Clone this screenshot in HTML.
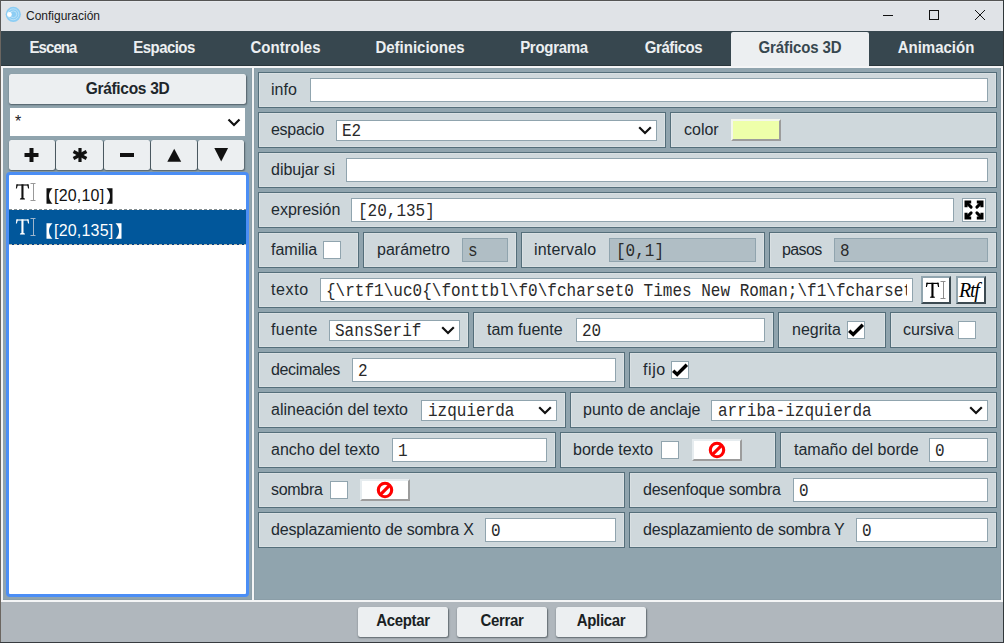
<!DOCTYPE html>
<html><head><meta charset="utf-8"><title>Configuración</title><style>
*{margin:0;padding:0;box-sizing:border-box}
html,body{width:1004px;height:643px;overflow:hidden;background:#555}
body{position:relative;font-family:"Liberation Sans",sans-serif}
div{position:absolute}
.t{white-space:pre;line-height:20px}
.lb{font-size:16px;color:#1E2A30}
.tab{font-weight:bold;font-size:15px;color:#ECEFF1;transform:scaleY(1.09);transform-origin:50% 15px}
.mono{font-family:"Liberation Mono",monospace;font-size:16px;color:#2a2a2a;transform:scaleY(1.1);transform-origin:0 15px}
.row{background:#CFD8DC;border:1px solid #546E7A;box-shadow:inset 1px 1px 0 #D9E0E3,inset -1px -1px 0 #D9E0E3}
.in{background:#fff;border:1px solid #90A4AE}
.dis{background:#B0BEC5;border:1px solid #90A4AE}
.cb{background:#fff;border:1px solid #90A4AE}
.btn{background:#ECEFF1;border-radius:2.5px;box-shadow:0.5px 1px 1.5px rgba(30,40,45,0.55)}
.bev{background:#fff;border-style:solid;border-width:2px;border-color:#E6ECEF #9C9C9C #9C9C9C #E6ECEF}
.bev2{background:#fff;border-style:solid;border-width:2px;border-color:#90A4AE #3C4A51 #3C4A51 #90A4AE}
svg{position:absolute;left:0;top:0}
</style></head><body>
<div style="left:0px;top:0px;width:1004px;height:1px;background:#545454"></div>
<div style="left:0px;top:0px;width:1px;height:643px;background:#5A5857"></div>
<div style="left:0px;top:31px;width:1px;height:612px;background:#6B6661"></div>
<div style="left:1003px;top:0px;width:1px;height:643px;background:#30373A"></div>
<div style="left:0px;top:642px;width:1004px;height:1px;background:#373B3F"></div>
<div style="left:1px;top:1px;width:1002px;height:30px;background:#E0E3E7"></div>
<div style="left:1px;top:1px;width:1002px;height:1px;background:#E6E9ED"></div>
<svg style="left:5px;top:6px" width="18" height="18" viewBox="0 0 18 18"><circle cx="8.3" cy="8.3" r="7.6" fill="#8CCDF4"/><circle cx="8.3" cy="8.3" r="5.5" fill="none" stroke="#BFE3F8" stroke-width="0.9"/><circle cx="8.3" cy="8.3" r="3.4" fill="none" stroke="#BFE3F8" stroke-width="0.9"/><circle cx="4.4" cy="8.5" r="2.4" fill="#fff"/></svg>
<div class="t " style="left:26px;top:6px;font-size:12px;color:#1b1b1b">Configuración</div>
<div style="left:883px;top:15px;width:10px;height:1px;background:#111"></div>
<div style="left:929px;top:10px;width:10px;height:10px;border:1px solid #111"></div>
<svg style="left:974px;top:9px" width="12" height="12" viewBox="0 0 12 12"><path d="M1 1L11 11M11 1L1 11" stroke="#111" stroke-width="1"/></svg>
<div style="left:1px;top:31px;width:1002px;height:35px;background:#37474F"></div>
<div style="left:1px;top:65px;width:1002px;height:1px;background:#2B383E"></div>
<div class="t tab" style="left:1px;top:38px;width:104px;text-align:center;letter-spacing:-0.9px">Escena</div>
<div class="t tab" style="left:105px;top:38px;width:118px;text-align:center;letter-spacing:-0.57px">Espacios</div>
<div class="t tab" style="left:223px;top:38px;width:125px;text-align:center;letter-spacing:0px">Controles</div>
<div class="t tab" style="left:348px;top:38px;width:144px;text-align:center;letter-spacing:0px">Definiciones</div>
<div class="t tab" style="left:492px;top:38px;width:124px;text-align:center;letter-spacing:-0.29px">Programa</div>
<div class="t tab" style="left:616px;top:38px;width:115px;text-align:center;letter-spacing:-0.43px">Gráficos</div>
<div style="left:731px;top:32px;width:138px;height:34px;background:#ECEFF1;border-radius:2px 2px 0 0"></div>
<div class="t tab" style="left:731px;top:38px;width:138px;text-align:center;color:#37474F;letter-spacing:-0.1px">Gráficos 3D</div>
<div class="t tab" style="left:869px;top:38px;width:134px;text-align:center;letter-spacing:0px">Animación</div>
<div style="left:1px;top:66px;width:1002px;height:536px;background:#F4F5F6"></div>
<div style="left:3px;top:68px;width:249px;height:532px;background:#90A4AE;box-shadow:inset -1px -1px 0 #8B9EA8"></div>
<div style="left:254px;top:68px;width:747px;height:532px;background:#90A4AE;box-shadow:inset 1px 0 0 #8B9EA8,inset -1px -1px 0 #8B9EA8"></div>
<div style="left:1px;top:602px;width:1002px;height:40px;background:#B0B7BD"></div>
<div class="btn" style="left:358px;top:607px;width:90px;height:30px;"></div>
<div class="t tab" style="left:358px;top:611px;width:90px;text-align:center;color:#1A1F24;font-size:15px;letter-spacing:-0.35px">Aceptar</div>
<div class="btn" style="left:457px;top:607px;width:90px;height:30px;"></div>
<div class="t tab" style="left:457px;top:611px;width:90px;text-align:center;color:#1A1F24;font-size:15px;letter-spacing:-0.35px">Cerrar</div>
<div class="btn" style="left:556px;top:607px;width:90px;height:30px;"></div>
<div class="t tab" style="left:556px;top:611px;width:90px;text-align:center;color:#1A1F24;font-size:15px;letter-spacing:-0.35px">Aplicar</div>
<div class="btn" style="left:9px;top:74px;width:237px;height:30px;"></div>
<div class="t tab" style="left:9px;top:79px;width:237px;text-align:center;color:#20262A;font-size:15.5px;letter-spacing:-0.3px">Gráficos 3D</div>
<div style="left:10px;top:108px;width:235px;height:28px;background:#fff"></div>
<div class="t " style="left:15px;top:112px;font-size:16px;color:#222">*</div>
<svg style="left:226px;top:116px" width="16" height="12" viewBox="0 0 16 12"><path d="M2.5 3.5L8 9L13.5 3.5" fill="none" stroke="#111" stroke-width="2.2"/></svg>
<div style="left:54px;top:141px;width:2px;height:28px;background:#7A8D96"></div>
<div style="left:102px;top:141px;width:2px;height:28px;background:#7A8D96"></div>
<div style="left:149px;top:141px;width:2px;height:28px;background:#7A8D96"></div>
<div style="left:196px;top:141px;width:2px;height:28px;background:#7A8D96"></div>
<div class="btn" style="left:9px;top:140px;width:46px;height:30px;"></div>
<div class="btn" style="left:56px;top:140px;width:47px;height:30px;"></div>
<div class="btn" style="left:104px;top:140px;width:46px;height:30px;"></div>
<div class="btn" style="left:151px;top:140px;width:46px;height:30px;"></div>
<div class="btn" style="left:198px;top:140px;width:46px;height:30px;"></div>
<svg style="left:24px;top:147px" width="16" height="16" viewBox="0 0 16 16"><path d="M7 1h4v14h-4z" fill="none"/><rect x="5.5" y="1" width="4" height="14" fill="#111"/><rect x="0.5" y="6" width="14" height="4" fill="#111"/></svg>
<svg style="left:72px;top:147px" width="16" height="16" viewBox="0 0 16 16"><g stroke="#111" stroke-width="3.2"><path d="M8 1V15"/><path d="M1.5 4.5L14.5 11.5"/><path d="M1.5 11.5L14.5 4.5"/></g></svg>
<div style="left:120px;top:153px;width:14px;height:4px;background:#111"></div>
<svg style="left:166px;top:148px" width="16" height="15" viewBox="0 0 16 15"><path d="M1.3 13.8L8.2 0.8L15.2 13.8Z" fill="#111"/></svg>
<svg style="left:213px;top:147px" width="16" height="15" viewBox="0 0 16 15"><path d="M1.3 1L15.1 1L8.2 14.4Z" fill="#111"/></svg>
<div style="left:6px;top:172px;width:243px;height:425px;background:#fff;border:3px solid #4B8EF5;border-radius:4px"></div>
<div style="left:9px;top:210px;width:237px;height:34px;background:#01579B"></div>
<div style="left:9px;top:209px;width:237px;height:1px;background:repeating-linear-gradient(90deg,#858E90 0 3px,#fff 3px 5px)"></div>
<div style="left:9px;top:244px;width:237px;height:1px;background:repeating-linear-gradient(90deg,#B7BBAE 0 3px,#02408C 3px 5px)"></div>
<svg style="left:15px;top:181px" width="22" height="21" viewBox="0 0 22 21"><g fill="#111" transform="translate(0,0.6)"><path d="M1.5 2.8H13.5V4.0H1.5Z"/><path d="M1.4 2.8H3.0L1.9 7H0.9Z"/><path d="M12 2.8H13.6L14.1 7H13.1Z"/><path d="M6.4 2.8H8.5V17.5H6.4Z"/><path d="M5.6 16.5H9.3L10.1 17.8H4.8Z"/></g><path d="M15.5 2.5H20.5M18.5 2.5V19.5M15.5 19.5H20.5" stroke="#999" stroke-width="1" fill="none"/></svg>
<svg style="left:46px;top:188px" width="8" height="16" viewBox="0 0 8 16"><path d="M0.5 0.3H6.5Q3 3.5 3 8Q3 12.5 6.5 15.7H0.5Z" fill="#111"/></svg>
<div class="t" style="left:54px;top:186px;font-size:16px;color:#111;letter-spacing:0.2px" id="lt184">[20,10]</div>
<svg style="left:105px;top:188px" width="8" height="16" viewBox="0 0 8 16"><path d="M7.5 0.3H1.5Q5 3.5 5 8Q5 12.5 1.5 15.7H7.5Z" fill="#111"/></svg>
<svg style="left:15px;top:216px" width="22" height="21" viewBox="0 0 22 21"><g fill="#fff" transform="translate(0,0.6)"><path d="M1.5 2.8H13.5V4.0H1.5Z"/><path d="M1.4 2.8H3.0L1.9 7H0.9Z"/><path d="M12 2.8H13.6L14.1 7H13.1Z"/><path d="M6.4 2.8H8.5V17.5H6.4Z"/><path d="M5.6 16.5H9.3L10.1 17.8H4.8Z"/></g><path d="M15.5 2.5H20.5M18.5 2.5V19.5M15.5 19.5H20.5" stroke="#9FB6CC" stroke-width="1" fill="none"/></svg>
<svg style="left:46px;top:223px" width="8" height="16" viewBox="0 0 8 16"><path d="M0.5 0.3H6.5Q3 3.5 3 8Q3 12.5 6.5 15.7H0.5Z" fill="#fff"/></svg>
<div class="t" style="left:54px;top:221px;font-size:16px;color:#fff;letter-spacing:0.2px" id="lt219">[20,135]</div>
<svg style="left:114px;top:223px" width="8" height="16" viewBox="0 0 8 16"><path d="M7.5 0.3H1.5Q5 3.5 5 8Q5 12.5 1.5 15.7H7.5Z" fill="#fff"/></svg>
<div class="row" style="left:258px;top:72px;width:739px;height:36px;"></div>
<div class="t lb" style="left:271px;top:80px;">info</div>
<div class="in" style="left:310px;top:78px;width:678px;height:24px;"></div>
<div class="row" style="left:258px;top:112px;width:408px;height:36px;"></div>
<div class="t lb" style="left:271px;top:120px;letter-spacing:-0.3px">espacio</div>
<div class="in" style="left:336px;top:120px;width:321px;height:21px;"></div>
<div class="t mono" style="left:342px;top:122px;">E2</div>
<svg style="left:638px;top:126px" width="14" height="9" viewBox="0 0 14 9"><path d="M1.2 1.2L7 7L12.8 1.2" fill="none" stroke="#111" stroke-width="2.2"/></svg>
<div class="row" style="left:670px;top:112px;width:327px;height:36px;"></div>
<div class="t lb" style="left:684px;top:120px;">color</div>
<div style="left:731px;top:119px;width:50px;height:22px;background:#EEFFAA;border-style:solid;border-width:2px;border-color:#F4F6EE #9C9C9C #9C9C9C #F4F6EE"></div>
<div class="row" style="left:258px;top:152px;width:739px;height:36px;"></div>
<div class="t lb" style="left:271px;top:160px;">dibujar si</div>
<div class="in" style="left:346px;top:158px;width:642px;height:24px;"></div>
<div class="row" style="left:258px;top:192px;width:739px;height:36px;"></div>
<div class="t lb" style="left:271px;top:200px;">expresión</div>
<div class="in" style="left:351px;top:198px;width:603px;height:24px;"></div>
<div class="t mono" style="left:358px;top:202px;">[20,135]</div>
<div style="left:962px;top:198px;width:24px;height:24px;background:#fff;border:1px solid #90A4AE"></div>
<svg style="left:962px;top:198px" width="24" height="24" viewBox="0 0 24 24"><g fill="#000" stroke="#000"><path d="M2.5 2.5H9.2V5.6H5.6V9.2H2.5Z" stroke="none"/><path d="M4.5 4.5L9.1 9.1" stroke-width="3" stroke-linecap="round"/><path d="M21.5 2.5H14.8V5.6H18.4V9.2H21.5Z" stroke="none"/><path d="M19.5 4.5L14.9 9.1" stroke-width="3" stroke-linecap="round"/><path d="M2.5 21.5H9.2V18.4H5.6V14.8H2.5Z" stroke="none"/><path d="M4.5 19.5L9.1 14.9" stroke-width="3" stroke-linecap="round"/><path d="M21.5 21.5H14.8V18.4H18.4V14.8H21.5Z" stroke="none"/><path d="M19.5 19.5L14.9 14.9" stroke-width="3" stroke-linecap="round"/></g></svg>
<div class="row" style="left:258px;top:232px;width:101px;height:36px;"></div>
<div class="t lb" style="left:271px;top:240px;">familia</div>
<div class="cb" style="left:323px;top:241px;width:18px;height:18px;"></div>
<div class="row" style="left:363px;top:232px;width:154px;height:36px;"></div>
<div class="t lb" style="left:377px;top:240px;">parámetro</div>
<div class="dis" style="left:462px;top:238px;width:46px;height:24px;"></div>
<div class="t mono" style="left:468px;top:242px;">s</div>
<div class="row" style="left:521px;top:232px;width:244px;height:36px;"></div>
<div class="t lb" style="left:534px;top:240px;letter-spacing:0.2px">intervalo</div>
<div class="dis" style="left:609px;top:238px;width:147px;height:24px;"></div>
<div class="t mono" style="left:616px;top:242px;">[0,1]</div>
<div class="row" style="left:769px;top:232px;width:228px;height:36px;"></div>
<div class="t lb" style="left:782px;top:240px;letter-spacing:-0.6px">pasos</div>
<div class="dis" style="left:834px;top:238px;width:154px;height:24px;"></div>
<div class="t mono" style="left:840px;top:242px;">8</div>
<div class="row" style="left:258px;top:272px;width:739px;height:36px;"></div>
<div class="t lb" style="left:271px;top:280px;letter-spacing:0.6px">texto</div>
<div class="in" style="left:320px;top:278px;width:593px;height:24px;"></div>
<div style="left:321px;top:279px;width:586px;height:22px;overflow:hidden"><div class="t mono" style="left:5px;top:3px;letter-spacing:0.02px">{\rtf1\uc0{\fonttbl\f0\fcharset0 Times New Roman;\f1\fcharset0 Arial;}</div></div>
<div class="bev2" style="left:921px;top:276px;width:30px;height:28px;"></div>
<svg style="left:925px;top:280px" width="22" height="21" viewBox="0 0 22 21"><g fill="#000" transform="translate(0,0)"><path d="M1.5 2.8H13.5V4.0H1.5Z"/><path d="M1.4 2.8H3.0L1.9 7H0.9Z"/><path d="M12 2.8H13.6L14.1 7H13.1Z"/><path d="M6.4 2.8H8.5V17.5H6.4Z"/><path d="M5.6 16.5H9.3L10.1 17.8H4.8Z"/></g><path d="M15.5 1.5H20.5M18.5 1.5V18.5M15.5 18.5H20.5" stroke="#8C8C8C" stroke-width="1" fill="none"/></svg>
<div class="bev2" style="left:956px;top:276px;width:30px;height:28px;"></div>
<div class="t" style="left:959px;top:280px;font-family:'Liberation Serif',serif;font-style:italic;font-size:20px;color:#000;letter-spacing:-1.2px">Rtf</div>
<div class="row" style="left:258px;top:312px;width:211px;height:36px;"></div>
<div class="t lb" style="left:271px;top:320px;letter-spacing:0.4px">fuente</div>
<div class="in" style="left:329px;top:320px;width:131px;height:21px;"></div>
<div class="t mono" style="left:335px;top:322px;">SansSerif</div>
<svg style="left:441px;top:326px" width="14" height="9" viewBox="0 0 14 9"><path d="M1.2 1.2L7 7L12.8 1.2" fill="none" stroke="#111" stroke-width="2.2"/></svg>
<div class="row" style="left:473px;top:312px;width:301px;height:36px;"></div>
<div class="t lb" style="left:487px;top:320px;">tam fuente</div>
<div class="in" style="left:576px;top:318px;width:189px;height:24px;"></div>
<div class="t mono" style="left:582px;top:322px;">20</div>
<div class="row" style="left:778px;top:312px;width:108px;height:36px;"></div>
<div class="t lb" style="left:792px;top:320px;">negrita</div>
<div class="cb" style="left:847px;top:321px;width:18px;height:18px;"></div>
<svg style="left:847px;top:321px" width="18" height="18" viewBox="0 0 18 18"><path d="M2.2 9.8L6.2 13.5L15.8 3.8" fill="none" stroke="#000" stroke-width="3.4" stroke-linecap="butt"/></svg>
<div class="row" style="left:890px;top:312px;width:107px;height:36px;"></div>
<div class="t lb" style="left:903px;top:320px;">cursiva</div>
<div class="cb" style="left:958px;top:321px;width:18px;height:18px;"></div>
<div class="row" style="left:258px;top:352px;width:367px;height:36px;"></div>
<div class="t lb" style="left:271px;top:360px;letter-spacing:-0.35px">decimales</div>
<div class="in" style="left:352px;top:358px;width:264px;height:24px;"></div>
<div class="t mono" style="left:358px;top:362px;">2</div>
<div class="row" style="left:629px;top:352px;width:368px;height:36px;"></div>
<div class="t lb" style="left:643px;top:360px;letter-spacing:0.6px">fijo</div>
<div class="cb" style="left:671px;top:361px;width:18px;height:18px;"></div>
<svg style="left:671px;top:361px" width="18" height="18" viewBox="0 0 18 18"><path d="M2.2 9.8L6.2 13.5L15.8 3.8" fill="none" stroke="#000" stroke-width="3.4" stroke-linecap="butt"/></svg>
<div class="row" style="left:258px;top:392px;width:308px;height:36px;"></div>
<div class="t lb" style="left:271px;top:400px;">alineación del texto</div>
<div class="in" style="left:421px;top:400px;width:136px;height:21px;"></div>
<div class="t mono" style="left:428px;top:402px;">izquierda</div>
<svg style="left:538px;top:406px" width="14" height="9" viewBox="0 0 14 9"><path d="M1.2 1.2L7 7L12.8 1.2" fill="none" stroke="#111" stroke-width="2.2"/></svg>
<div class="row" style="left:570px;top:392px;width:427px;height:36px;"></div>
<div class="t lb" style="left:583px;top:400px;">punto de anclaje</div>
<div class="in" style="left:711px;top:400px;width:277px;height:21px;"></div>
<div class="t mono" style="left:718px;top:402px;">arriba-izquierda</div>
<svg style="left:969px;top:406px" width="14" height="9" viewBox="0 0 14 9"><path d="M1.2 1.2L7 7L12.8 1.2" fill="none" stroke="#111" stroke-width="2.2"/></svg>
<div class="row" style="left:258px;top:432px;width:298px;height:36px;"></div>
<div class="t lb" style="left:271px;top:440px;">ancho del texto</div>
<div class="in" style="left:392px;top:438px;width:155px;height:24px;"></div>
<div class="t mono" style="left:398px;top:442px;">1</div>
<div class="row" style="left:560px;top:432px;width:216px;height:36px;"></div>
<div class="t lb" style="left:573px;top:440px;">borde texto</div>
<div class="cb" style="left:661px;top:441px;width:18px;height:18px;"></div>
<div class="bev" style="left:692px;top:439px;width:50px;height:22px;"></div>
<svg style="left:707px;top:440px" width="20" height="20" viewBox="0 0 20 20"><circle cx="10" cy="10" r="6.7" fill="none" stroke="#F00" stroke-width="3.1"/><path d="M14.6 5.4L5.4 14.6" stroke="#F00" stroke-width="3.2"/></svg>
<div class="row" style="left:780px;top:432px;width:217px;height:36px;"></div>
<div class="t lb" style="left:794px;top:440px;">tamaño del borde</div>
<div class="in" style="left:929px;top:438px;width:59px;height:24px;"></div>
<div class="t mono" style="left:935px;top:442px;">0</div>
<div class="row" style="left:258px;top:472px;width:367px;height:36px;"></div>
<div class="t lb" style="left:271px;top:480px;letter-spacing:-0.3px">sombra</div>
<div class="cb" style="left:330px;top:481px;width:18px;height:18px;"></div>
<div class="bev" style="left:360px;top:479px;width:50px;height:22px;"></div>
<svg style="left:375px;top:480px" width="20" height="20" viewBox="0 0 20 20"><circle cx="10" cy="10" r="6.7" fill="none" stroke="#F00" stroke-width="3.1"/><path d="M14.6 5.4L5.4 14.6" stroke="#F00" stroke-width="3.2"/></svg>
<div class="row" style="left:629px;top:472px;width:368px;height:36px;"></div>
<div class="t lb" style="left:643px;top:480px;letter-spacing:-0.22px">desenfoque sombra</div>
<div class="in" style="left:793px;top:478px;width:195px;height:24px;"></div>
<div class="t mono" style="left:799px;top:482px;">0</div>
<div class="row" style="left:258px;top:512px;width:367px;height:36px;"></div>
<div class="t lb" style="left:271px;top:520px;letter-spacing:-0.17px">desplazamiento de sombra X</div>
<div class="in" style="left:485px;top:518px;width:131px;height:24px;"></div>
<div class="t mono" style="left:491px;top:522px;">0</div>
<div class="row" style="left:629px;top:512px;width:368px;height:36px;"></div>
<div class="t lb" style="left:643px;top:520px;letter-spacing:-0.21px">desplazamiento de sombra Y</div>
<div class="in" style="left:856px;top:518px;width:132px;height:24px;"></div>
<div class="t mono" style="left:862px;top:522px;">0</div>
</body></html>
